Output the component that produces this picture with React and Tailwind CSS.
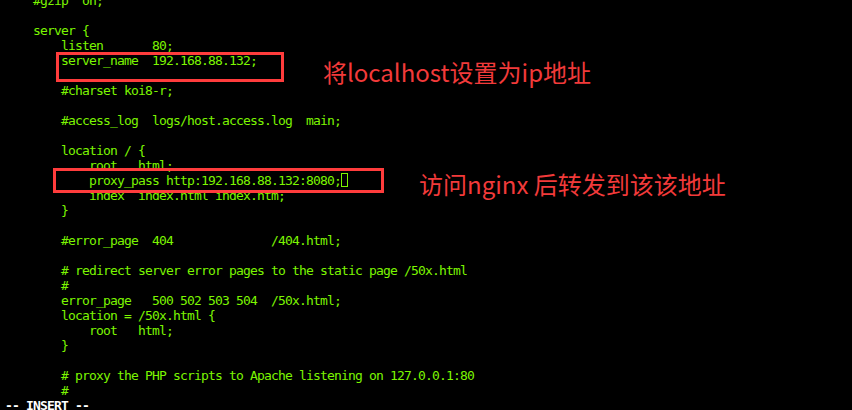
const lines = [
  "    #gzip  on;",
  "",
  "    server {",
  "        listen       80;",
  "        server_name  192.168.88.132;",
  "",
  "        #charset koi8-r;",
  "",
  "        #access_log  logs/host.access.log  main;",
  "",
  "        location / {",
  "            root   html;",
  "            proxy_pass http:192.168.88.132:8080;",
  "            index  index.html index.htm;",
  "        }",
  "",
  "        #error_page  404              /404.html;",
  "",
  "        # redirect server error pages to the static page /50x.html",
  "        #",
  "        error_page   500 502 503 504  /50x.html;",
  "        location = /50x.html {",
  "            root   html;",
  "        }",
  "",
  "        # proxy the PHP scripts to Apache listening on 127.0.0.1:80",
  "        #",
];

const App = () => {
  return (
    <div className="relative w-[852px] h-[410px] overflow-hidden bg-black">
      <div className="-mt-[7px] px-[5px] font-['DejaVu_Sans_Mono',monospace] text-[13px] leading-[15px] tracking-[-0.826px] text-[#7cf500] whitespace-pre">
        {lines.map((line, i) => (
          <div key={i} className="h-[15px]">
            {line}
            {i === 12 && (
              <span className="inline-block align-top w-[7px] h-[14px] border border-[#7cf500]" />
            )}
          </div>
        ))}
        <div className="h-[15px] font-bold text-white">-- INSERT --</div>
      </div>

      {/* annotations */}
      <div className="absolute left-[56px] top-[52px] w-[228px] h-[30px] border-[3px] border-[#ff3c3c]" />
      <div className="absolute left-[53px] top-[168px] w-[331px] h-[25px] border-[3px] border-[#ff3c3c]" />
      <div className="absolute left-[323px] top-[60px] font-['Noto_Sans_CJK_SC',sans-serif] text-[24px] leading-none text-[#f23a3a] whitespace-nowrap">
        将localhost设置为ip地址
      </div>
      <div className="absolute left-[419px] top-[172px] font-['Noto_Sans_CJK_SC',sans-serif] text-[24px] leading-none text-[#f23a3a] whitespace-nowrap">
        访问nginx 后转发到该该地址
      </div>
    </div>
  );
};

export default App;
